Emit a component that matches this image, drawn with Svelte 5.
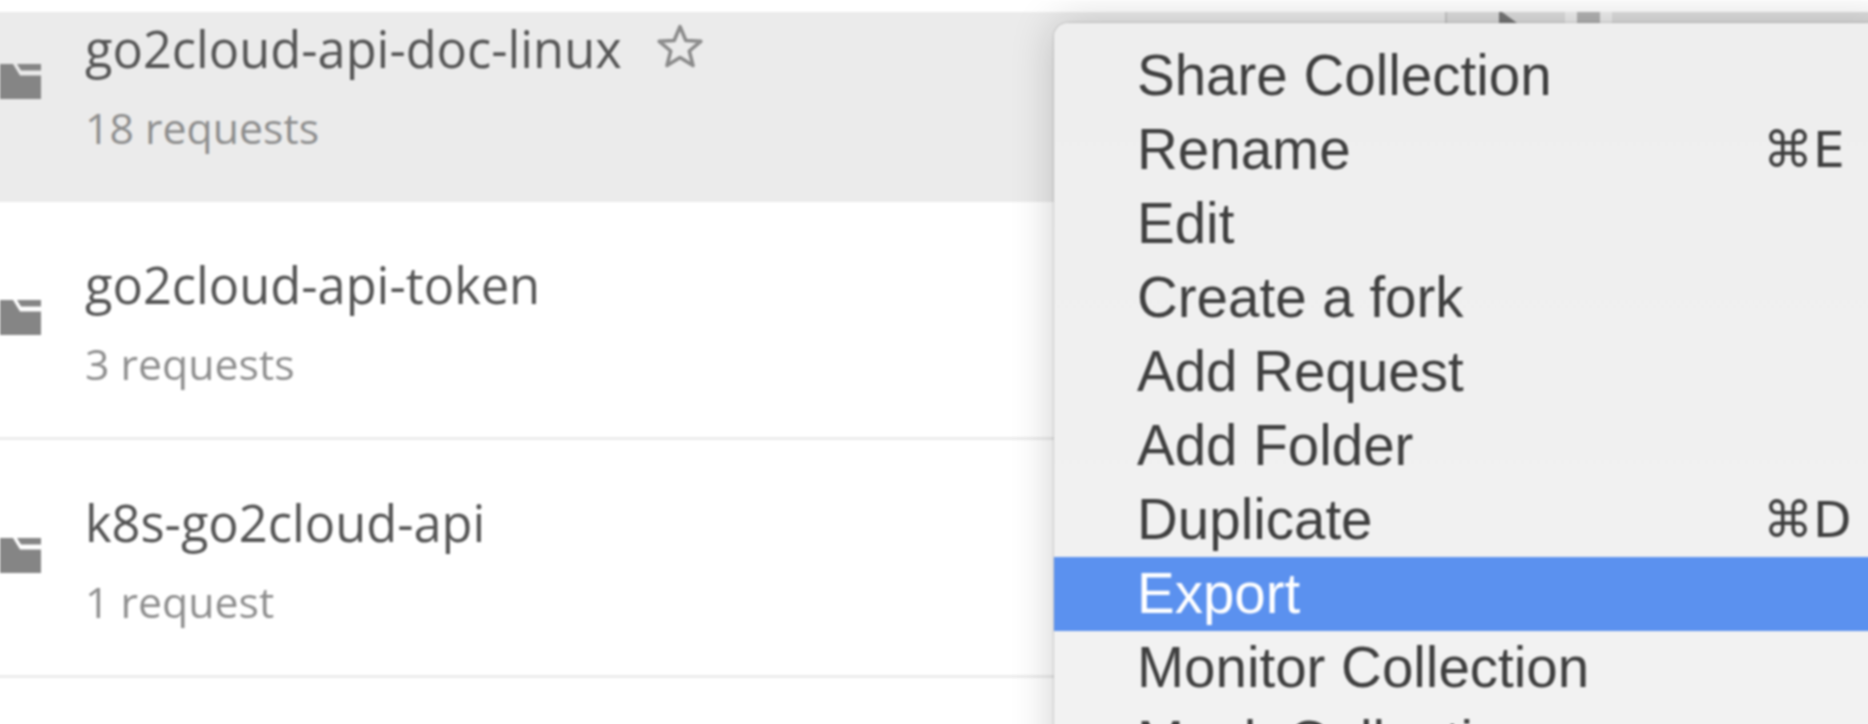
<script lang="ts">
  const collections = [
    { name: 'go2cloud-api-doc-linux', count: '18 requests', active: true },
    { name: 'go2cloud-api-token', count: '3 requests', active: false },
    { name: 'k8s-go2cloud-api', count: '1 request', active: false }
  ];

  const menuItems = [
    { label: 'Share Collection' },
    { label: 'Rename', shortcut: '⌘E' },
    { label: 'Edit' },
    { label: 'Create a fork' },
    { label: 'Add Request' },
    { label: 'Add Folder' },
    { label: 'Duplicate', shortcut: '⌘D' },
    { label: 'Export', selected: true },
    { label: 'Monitor Collection' },
    { label: 'Mock Collection' }
  ];
</script>

<div class="page">
  <div class="list">
    {#each collections as item}
      <div class="row" class:active={item.active}>
        <svg class="folder" viewBox="0 0 41 35" aria-hidden="true">
          <path d="M0 0H13L20 11.500H41V35H0Z" />
          <path d="M17 0H41V6.500H21Z" />
        </svg>
        <div class="info">
          <div class="title">
            <span>{item.name}</span>
            {#if item.active}
              <svg class="star" viewBox="0 0 46 44" aria-hidden="true">
                <path d="M23 2.500L28.800 16.500L43.800 17.300L32.300 27L36 41.500L23 33.500L10 41.500L13.700 27L2.200 17.300L17.200 16.500Z" />
              </svg>
            {/if}
          </div>
          <div class="count">{item.count}</div>
        </div>
        {#if item.active}
          <div class="actions">
            <span class="divider"></span>
            <svg class="caret" viewBox="0 0 18 11" aria-hidden="true"><path d="M0 0H3L18 11H0Z" /></svg>
            <span class="block"></span>
          </div>
        {/if}
      </div>
    {/each}
  </div>

  <div class="menu">
    {#each menuItems as item}
      <div class="menu-item" class:selected={item.selected}>
        <span>{item.label}</span>
        {#if item.shortcut}
          <span class="shortcut">{item.shortcut}</span>
        {/if}
      </div>
    {/each}
  </div>
</div>

<style>
  :global(body) {
    background: #fff;
    overflow: hidden;
  }

  /* the reference is an upscaled shot, so the whole page is softened; the
     extra width keeps the blur from fading out at the window edges */
  .page {
    position: relative;
    width: 1880px;
    height: 736px;
    margin-left: -6px;
    overflow: hidden;
    padding-top: 12px;
    box-sizing: border-box;
    filter: blur(0.8px);
  }

  .row {
    position: relative;
    display: flex;
    height: 238px;
    box-sizing: border-box;
    padding: 56px 0 0 6px;
    border-bottom: 3px solid #ececec;
  }

  .row.active {
    height: 190px;
    padding-top: 10px;
    background: #ebebeb;
    border-bottom: 0;
  }

  .folder {
    flex: none;
    width: 41px;
    height: 35px;
    margin-top: 42px;
    fill: #858585;
  }

  .info {
    margin-left: 44px;
    font-family: 'Open Sans', sans-serif;
  }

  .title {
    display: flex;
    align-items: flex-start;
    height: 60px;
    font-size: 50.600px;
    line-height: 54px;
    color: #555;
  }

  .star {
    width: 46px;
    height: 44px;
    margin: 2px 0 0 35px;
    fill: none;
    stroke: #8a8a8a;
    stroke-width: 3.500;
    stroke-linejoin: round;
  }

  .count {
    margin-top: 22px;
    font-size: 42.800px;
    line-height: 48px;
    color: #8e8e8e;
  }

  .actions {
    position: absolute;
    top: 0;
    left: 1451px;
    right: 0;
    height: 11px;
    display: flex;
    background: #dedede;
  }

  .divider {
    width: 2px;
    background: #c6c6c6;
  }

  .caret {
    width: 18px;
    height: 11px;
    margin-left: 52px;
    fill: #777;
  }

  .block {
    width: 23px;
    margin-left: 60px;
    background: #b4b4b4;
    box-shadow: -12px 0 0 #efefef, 12px 0 0 #efefef;
  }

  .menu {
    position: absolute;
    top: 23px;
    left: 1060px;
    right: -20px;
    bottom: -80px;
    padding-top: 16px;
    border-radius: 14px 0 0 0;
    background: linear-gradient(180deg, #eeeeee, #f3f3f3);
    box-shadow: 0 0 2px rgba(0, 0, 0, 0.4), 0 0 44px rgba(0, 0, 0, 0.2);
    font-family: 'Liberation Sans', Arial, sans-serif;
    font-size: 56.500px;
    color: #3f3f3f;
  }

  .menu-item {
    display: flex;
    height: 74px;
    line-height: 74px;
    padding-left: 83px;
    white-space: nowrap;
  }

  .menu-item.selected {
    background: #5b91ef;
    color: #fff;
  }

  .shortcut {
    position: absolute;
    left: 709px;
    font-family: 'DejaVu Sans', 'Liberation Sans', sans-serif;
    font-size: 50px;
  }
</style>
